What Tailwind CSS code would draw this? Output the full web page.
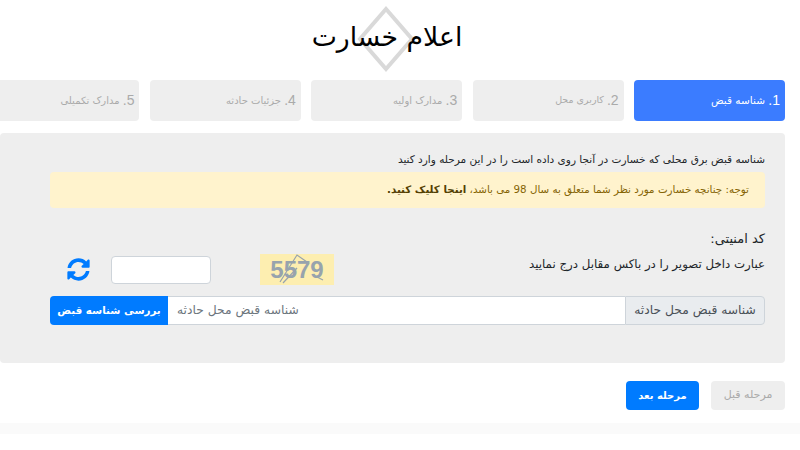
<!DOCTYPE html>
<html lang="fa" dir="rtl">
<head>
<meta charset="utf-8">
<script src="https://cdn.jsdelivr.net/npm/@tailwindcss/browser@4"></script>
</head>
<body class="w-[800px] h-[450px] overflow-hidden bg-white font-['DejaVu_Sans',sans-serif] text-[#212529]">
<header class="relative h-[80px] flex justify-center items-start">
  <svg class="absolute left-[355px] top-[2px]" width="64" height="74" viewBox="0 0 64 74" fill="none" stroke="#d9d9d9" stroke-width="4"><polygon points="31,7 57,37 31,67 5,37"/></svg>
  <h1 class="relative mr-[26px] mt-[17px] text-[26.7px] leading-[40px] text-black font-normal">اعلام خسارت</h1>
</header>
<nav class="flex gap-[10.6px] pr-[15px] h-[41px]">
  <div class="w-[150.8px] shrink-0 rounded-[4px] bg-[#3b7cff] text-white flex items-center pr-[5px] text-[10.5px]"><span class="text-[14px] font-['Liberation_Sans']">1.</span>&nbsp;شناسه قبض</div>
  <div class="w-[150.8px] shrink-0 rounded-[4px] bg-[#eeeeee] text-[#aaaaaa] flex items-center pr-[5px] text-[9.5px]"><span class="text-[14px] font-['Liberation_Sans']">2.</span>&nbsp;کاربری محل</div>
  <div class="w-[150.8px] shrink-0 rounded-[4px] bg-[#eeeeee] text-[#aaaaaa] flex items-center pr-[5px] text-[10px]"><span class="text-[14px] font-['Liberation_Sans']">3.</span>&nbsp;مدارک اولیه</div>
  <div class="w-[150.8px] shrink-0 rounded-[4px] bg-[#eeeeee] text-[#aaaaaa] flex items-center pr-[5px] text-[10px]"><span class="text-[14px] font-['Liberation_Sans']">4.</span>&nbsp;جزئیات حادثه</div>
  <div class="w-[150.8px] shrink-0 rounded-[4px] bg-[#eeeeee] text-[#aaaaaa] flex items-center pr-[5px] text-[10px]"><span class="text-[14px] font-['Liberation_Sans']">5.</span>&nbsp;مدارک تکمیلی</div>
</nav>
<main class="mt-[12px] mr-[15px] w-[785px] h-[230px] bg-[#eeeeee] rounded-[4px] pt-[18px] pr-[20px] pl-[20px]">
  <p class="leading-[16px] text-[10.5px]">شناسه قبض برق محلی که خسارت در آنجا روی داده است را در این مرحله وارد کنید</p>
  <div class="mt-[5px] ml-[30px] h-[36px] rounded-[4px] bg-[#fff3cd] text-[#856404] flex items-center pr-[16px] text-[10.3px]">
    <span>توجه: چنانچه خسارت مورد نظر شما متعلق به سال 98 می باشد، <b class="text-[#533f03]">اینجا کلیک کنید.</b></span>
  </div>
  <div class="mt-[23px] leading-[16px] text-[13px]">کد امنیتی:</div>
  <div class="mt-[7px] h-[31px] flex items-center">
    <div class="w-[236px] shrink-0 text-[11.8px] leading-[16px] self-start pt-[1px] mt-[1px] whitespace-nowrap">عبارت داخل تصویر را در باکس مقابل درج نمایید</div>
    <div dir="ltr" class="relative mr-[195px] w-[74px] h-[31px] bg-[#fdeeb0] flex items-center justify-center overflow-hidden shrink-0 text-[#97a3ad] font-bold text-[24px] font-['Liberation_Sans']">
      5579
      <svg class="absolute inset-0" width="74" height="31" viewBox="0 0 74 31" fill="none" stroke="#97a3ad" stroke-width="1.2"><path d="M20 28 L37 1 L47 8"/><path d="M23 29 L37 14"/><path d="M57 23 L63 26"/></svg>
    </div>
    <input type="text" aria-label="کد" class="mr-[49px] w-[100px] h-[28px] bg-white border border-[#ced4da] rounded-[4px] shrink-0">
    <svg class="mr-[21px] shrink-0" width="23" height="23" viewBox="0 0 512 512" fill="#007bff"><path d="M370.72 133.28C339.458 104.008 298.888 87.962 255.848 88c-77.458.068-144.328 53.178-162.791 126.85-1.344 5.363-6.122 9.15-11.651 9.15H24.103c-7.498 0-13.194-6.807-11.807-14.176C33.933 94.924 134.813 8 256 8c66.448 0 126.791 26.136 171.315 68.685L463.03 40.97C478.149 25.851 504 36.559 504 57.941V192c0 13.255-10.745 24-24 24H345.941c-21.382 0-32.09-25.851-16.971-40.971l41.75-41.749zM32 296h134.059c21.382 0 32.09 25.851 16.971 40.971l-41.75 41.75c31.262 29.273 71.835 45.319 114.876 45.28 77.418-.07 144.315-53.144 162.787-126.849 1.344-5.363 6.122-9.15 11.651-9.15h57.304c7.498 0 13.194 6.807 11.807 14.176C478.067 417.076 377.187 504 256 504c-66.448 0-126.791-26.136-171.315-68.685L48.97 471.03C33.851 486.149 8 475.441 8 454.059V320c0-13.255 10.745-24 24-24z"/></svg>
  </div>
  <div class="mt-[11px] ml-[30px] h-[29px] flex text-[12.3px]">
    <div class="w-[140px] shrink-0 bg-[#e9ecef] border border-[#ced4da] rounded-r-[4px] flex items-center justify-center text-[#495057]">شناسه قبض محل حادثه</div>
    <div class="flex-1 bg-white border-y border-[#ced4da] flex items-center justify-end pl-[9px] text-[#6c757d]">شناسه قبض محل حادثه</div>
    <button class="w-[118px] shrink-0 bg-[#007bff] text-white rounded-l-[4px] font-bold text-[10.3px]">بررسی شناسه قبض</button>
  </div>
</main>
<div class="flex gap-[12px] pr-[15px] mt-[18px] h-[29px]">
  <button class="w-[74px] rounded-[4px] bg-[#eeeeee] text-[#aaaaaa] text-[11px]">مرحله قبل</button>
  <button class="w-[73px] rounded-[4px] bg-[#007bff] text-white font-bold text-[10px]">مرحله بعد</button>
</div>
<div class="mt-[13px] h-[11px] bg-[#fafafa]"></div>
</body>
</html>
